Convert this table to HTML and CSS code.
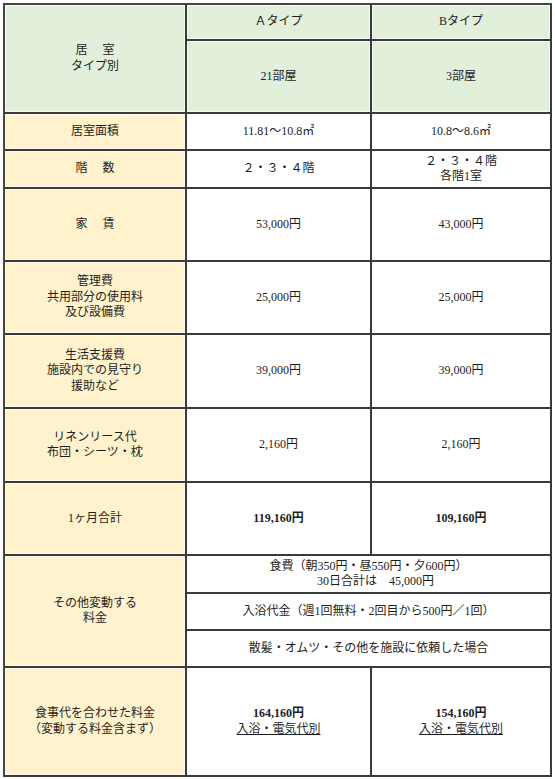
FILE: index.html
```html
<!DOCTYPE html>
<html lang="ja">
<head>
<meta charset="utf-8">
<title>居室タイプ別料金</title>
<link rel="stylesheet" href="styles.css">
</head>
<body>
<table class="fees">
  <tr>
    <td class="head col-label" rowspan="2">居　 室<br>タイプ別</td>
    <td class="head col-a row-type">Ａタイプ</td>
    <td class="head col-b row-type">Bタイプ</td>
  </tr>
  <tr>
    <td class="head row-rooms">21部屋</td>
    <td class="head row-rooms">3部屋</td>
  </tr>
  <tr>
    <td class="label row-area">居室面積</td>
    <td class="row-area">11.81〜10.8㎡</td>
    <td class="row-area">10.8〜8.6㎡</td>
  </tr>
  <tr>
    <td class="label row-floor">階　 数</td>
    <td class="row-floor">２・３・４階</td>
    <td class="row-floor">２・３・４階<br>各階1室</td>
  </tr>
  <tr>
    <td class="label row-tall">家　 賃</td>
    <td class="row-tall">53,000円</td>
    <td class="row-tall">43,000円</td>
  </tr>
  <tr>
    <td class="label row-tall">管理費<br>共用部分の使用料<br>及び設備費</td>
    <td class="row-tall">25,000円</td>
    <td class="row-tall">25,000円</td>
  </tr>
  <tr>
    <td class="label row-tall2">生活支援費<br>施設内での見守り<br>援助など</td>
    <td class="row-tall2">39,000円</td>
    <td class="row-tall2">39,000円</td>
  </tr>
  <tr>
    <td class="label row-tall2">リネンリース代<br>布団・シーツ・枕</td>
    <td class="row-tall2">2,160円</td>
    <td class="row-tall2">2,160円</td>
  </tr>
  <tr>
    <td class="label row-tall">1ヶ月合計</td>
    <td class="row-tall total">119,160円</td>
    <td class="row-tall total">109,160円</td>
  </tr>
  <tr>
    <td class="label" rowspan="3">その他変動する<br>料金</td>
    <td class="row-meal" colspan="2">食費（朝350円・昼550円・夕600円）<br><span class="indent">30日合計は　45,000円</span></td>
  </tr>
  <tr>
    <td class="row-sub" colspan="2">入浴代金（週1回無料・2回目から500円／1回）</td>
  </tr>
  <tr>
    <td class="row-sub" colspan="2">散髪・オムツ・その他を施設に依頼した場合</td>
  </tr>
  <tr>
    <td class="label row-final">食事代を合わせた料金<br>（変動する料金含まず）</td>
    <td class="row-final"><span class="total">164,160円</span><br><span class="note">入浴・電気代別</span></td>
    <td class="row-final"><span class="total">154,160円</span><br><span class="note">入浴・電気代別</span></td>
  </tr>
</table>
</body>
</html>
```

FILE: styles.css
```css
html, body {
  margin: 0;
  padding: 0;
  background: #ffffff;
}

body {
  padding: 3px 0 0 3px;
}

.fees {
  border-collapse: separate;
  border-spacing: 0;
  border-top: 2px solid #444444;
  border-left: 2px solid #444444;
  font-family: "Liberation Serif", "Noto Sans CJK JP", serif;
  font-size: 12px;
  line-height: 15.5px;
  color: #1e1e1e;
}

.fees td {
  box-sizing: border-box;
  padding: 0;
  border-right: 2px solid #3a3a3a;
  border-bottom: 2px solid #3a3a3a;
  text-align: center;
  vertical-align: middle;
  background: #ffffff;
  box-shadow: inset 0 0 0 1px rgba(255, 255, 255, 0.7);
}

.fees td.head {
  background: #e2efda;
}

.fees td.label {
  background: #fff2cc;
}

.col-label { width: 182px; }
.col-a { width: 185px; }
.col-b { width: 180px; }

.row-type { height: 36px; }
.row-rooms { height: 73px; }
.row-area { height: 37px; }
.row-floor { height: 38px; }
.row-tall { height: 73px; }
.row-tall2 { height: 74px; }
.row-meal { height: 38px; }
.row-sub { height: 37px; }
.row-final { height: 109px; }

.total {
  font-weight: bold;
}

.note {
  text-decoration: underline;
}

.indent {
  padding-left: 14px;
}
```
